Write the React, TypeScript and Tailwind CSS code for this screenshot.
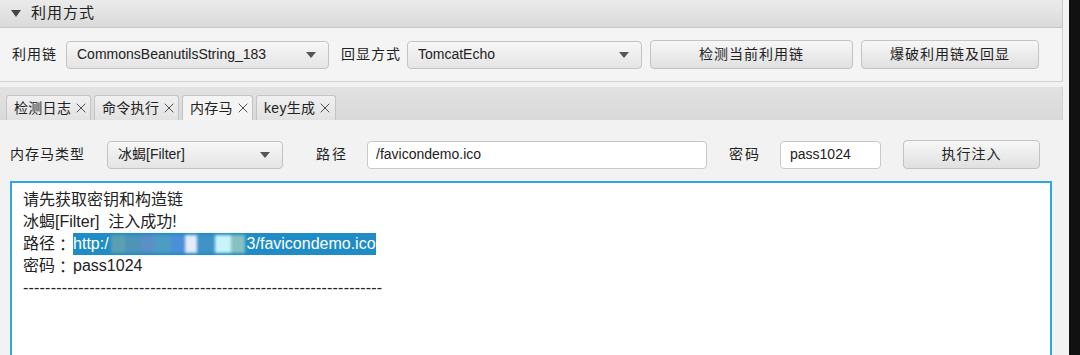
import { X } from 'lucide-react';

const font = "font-['Liberation_Sans','Noto_Sans_CJK_SC',sans-serif]";

function Combo({ value, className }: { value: string; className: string }) {
  return (
    <div
      className={`flex h-[28px] items-center justify-between rounded-[4px] border border-[#c3c3c3] bg-gradient-to-b from-[#f7f7f7] to-[#e4e4e4] pl-[10px] pr-[12px] text-[14px] text-[#222] ${className}`}
    >
      <span className="whitespace-nowrap">{value}</span>
      <svg width="10" height="6" viewBox="0 0 10 6">
        <path d="M0 0 L10 0 L5 6 Z" fill="#555" />
      </svg>
    </div>
  );
}

function Btn({ label, className }: { label: string; className: string }) {
  return (
    <div
      className={`flex h-[29px] items-center justify-center rounded-[4px] border border-[#c3c3c3] bg-gradient-to-b from-[#f7f7f7] to-[#e0e0e0] text-[14px] tracking-[1px] text-[#222] ${className}`}
    >
      {label}
    </div>
  );
}

const tabs = [
  { name: '检测日志', w: 'w-[85px]' },
  { name: '命令执行', w: 'w-[85px]' },
  { name: '内存马', w: 'w-[71px]', active: true },
  { name: 'key生成', w: 'w-[80px]' },
];

// full-width colon centred in its box, like the source screenshot
const colon = "font-['Noto_Sans_CJK_TC',sans-serif]";

export default function App() {
  return (
    <div className={`flex h-[355px] w-[1080px] overflow-hidden bg-[#f2f2f2] ${font}`}>
      <div className="flex w-[1063px] flex-col">
        {/* Collapsible header */}
        <div className="flex h-[28px] items-center border-b border-r border-[#c6c6c6] bg-gradient-to-b from-[#ebebeb] to-[#dadada] pl-[11px] text-[15px] text-[#222]">
          <svg width="10" height="7" viewBox="0 0 10 7" className="mr-[10px]">
            <path d="M0 0 L10 0 L5 7 Z" fill="#444" />
          </svg>
          <span className="tracking-[1px]">利用方式</span>
        </div>

        {/* Exploit chain row */}
        <div className="flex h-[54px] items-center border-b border-r border-[#d2d2d2] bg-[#f4f4f4] text-[14px] text-[#222]">
          <span className="ml-[12px] w-[54px] tracking-[1px]">利用链</span>
          <Combo value="CommonsBeanutilsString_183" className="w-[263px]" />
          <span className="ml-[12px] w-[66px] tracking-[1px]">回显方式</span>
          <Combo value="TomcatEcho" className="w-[235px]" />
          <Btn label="检测当前利用链" className="ml-[8px] w-[203px]" />
          <Btn label="爆破利用链及回显" className="ml-[8px] w-[178px]" />
        </div>

        <div className="h-[5px]" />

        {/* Tab bar */}
        <div className="flex h-[33px] items-end gap-[3px] border-r border-[#d2d2d2] bg-gradient-to-b from-[#e2e2e2] to-[#d9d9d9] pl-[6px]">
          {tabs.map((t) => (
            <div
              key={t.name}
              className={`flex h-[25px] shrink-0 items-center gap-[2px] whitespace-nowrap rounded-t-[3px] border border-b-0 border-[#c4c4c4] pl-[7px] text-[14px] text-[#222] ${t.w} ${
                t.active ? 'bg-[#f4f4f4]' : 'bg-gradient-to-b from-[#f0f0f0] to-[#e2e2e2]'
              }`}
            >
              <span className="tracking-[0.3px]">{t.name}</span>
              <X className="h-[16px] w-[16px] shrink-0 text-[#444]" strokeWidth={1.4} />
            </div>
          ))}
        </div>

        {/* Memshell row */}
        <div className="mt-[20px] flex items-center text-[14px] text-[#222]">
          <span className="ml-[10px] w-[97px] tracking-[1px]">内存马类型</span>
          <Combo value="冰蝎[Filter]" className="w-[176px]" />
          <span className="ml-[33px] w-[51px] tracking-[2px]">路径</span>
          <div className="flex h-[28px] w-[340px] items-center rounded-[4px] border border-[#c9c9c9] bg-white pl-[8px]">
            /favicondemo.ico
          </div>
          <span className="ml-[22px] w-[51px] tracking-[2px]">密码</span>
          <div className="flex h-[28px] w-[101px] items-center rounded-[4px] border border-[#c9c9c9] bg-white pl-[9px]">
            pass1024
          </div>
          <Btn label="执行注入" className="ml-[22px] w-[137px]" />
        </div>

        {/* Output area */}
        <div className="ml-[10px] mt-[12px] w-[1042px] flex-1 border-2 border-b-0 border-[#2ea7dc] bg-white pl-[11px] pt-[6px] text-[16px] leading-[22px] text-[#222]">
          <div>请先获取密钥和构造链</div>
          <div>冰蝎[Filter]&nbsp; 注入成功!</div>
          <div className="flex items-center">
            <span>路径</span>
            <span className={colon}>：</span>
            <span className="ml-[2px] flex items-center bg-[#1f8cc5] text-white">
              <span>http:/</span>
              <span className="mx-[2px] flex h-[18px] items-center blur-[1.5px]">
                <span className="h-full w-[14px] bg-[#5ba0b0]" />
                <span className="h-full w-[16px] bg-[#4e94b8]" />
                <span className="h-full w-[14px] bg-[#5a8fc8]" />
                <span className="h-full w-[16px] bg-[#4d9cc4]" />
                <span className="h-full w-[14px] bg-[#4a8fd8]" />
                <span className="h-full w-[12px] bg-[#e6ecfb]" />
                <span className="h-full w-[18px] bg-[#3f93c6]" />
                <span className="h-full w-[16px] bg-[#c8f3fa]" />
                <span className="h-full w-[14px] bg-[#86c2c2]" />
              </span>
              <span>3/favicondemo.ico</span>
            </span>
          </div>
          <div className="flex items-center">
            <span>密码</span>
            <span className={colon}>：</span>
            <span className="ml-[2px]">pass1024</span>
          </div>
          <div className="tracking-[0.2px]">
            -----------------------------------------------------------------
          </div>
        </div>
      </div>
      <div className="w-[6px]" />
      <div className="w-[11px] bg-[#111]" />
    </div>
  );
}
